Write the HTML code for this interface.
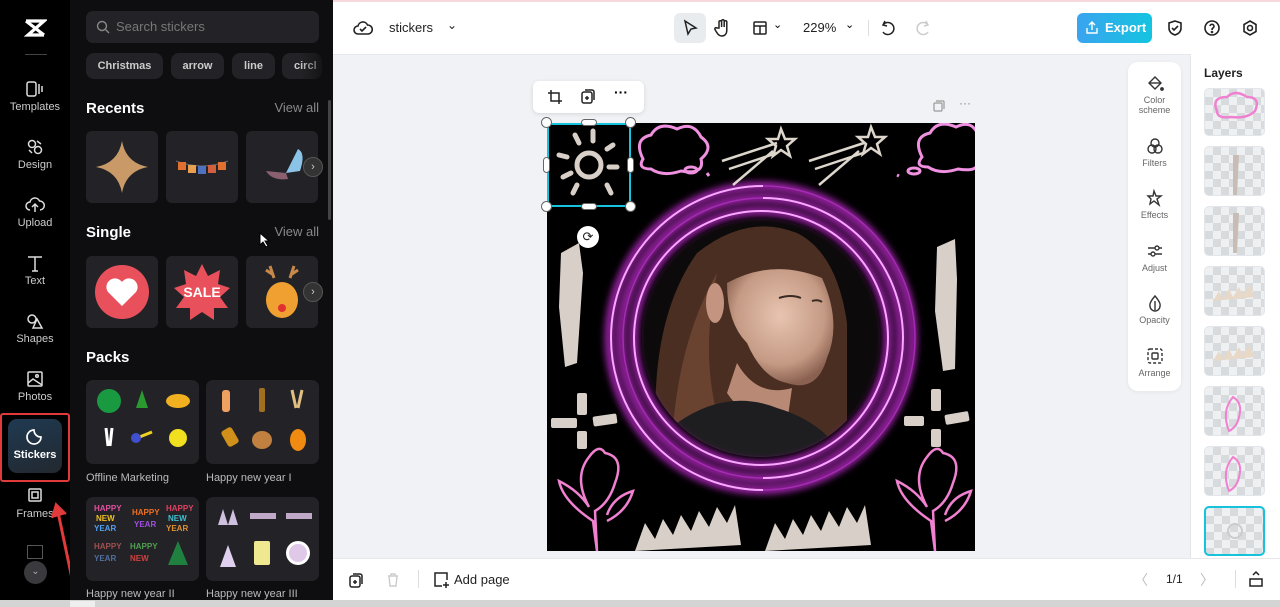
<!DOCTYPE html>
<html><head><meta charset="utf-8"><style>
*{box-sizing:border-box;margin:0;padding:0}
body{width:1280px;height:607px;overflow:hidden;font-family:"Liberation Sans",sans-serif;background:#fff;position:relative}
.abs{position:absolute}
.rail{left:0;top:0;width:70px;height:600px;background:#000;color:#ccc;font-size:11px}
.ri{position:absolute;left:0;width:70px;text-align:center}
.ri svg{display:block;margin:0 auto 3px}
.panel{left:70px;top:0;width:263px;height:600px;background:#0e0e10;color:#fff}
.tile{position:absolute;width:72px;height:72px;background:#232327;border-radius:6px}
.chip{position:absolute;top:53px;height:26px;background:#232327;border-radius:8px;color:#ccc;font-size:11px;font-weight:bold;line-height:26px;text-align:center}
.h{position:absolute;left:16px;font-size:15px;font-weight:bold}
.va{position:absolute;right:14px;font-size:13px;color:#888}
.pack{position:absolute;width:113px;height:84px;background:#232327;border-radius:7px}
.pl{position:absolute;font-size:11px;color:#bbb}
.arrowc{position:absolute;width:20px;height:20px;border-radius:50%;background:#333;border:1px solid #555;color:#ccc;font-size:11px;text-align:center;line-height:18px}
.tool{position:absolute;left:0;width:53px;text-align:center;font-size:9px;color:#666;line-height:10px}
.tool svg{display:block;margin:0 auto 3px}
.layer{position:absolute;left:1204px;width:61px;height:50px;border-radius:5px;background:
conic-gradient(#d8dbde 25%,#eef0f2 0 50%,#d8dbde 0 75%,#eef0f2 0) 0 0/16px 16px;border:1px solid #e2e6ea}
</style></head><body>
<div class="abs" style="left:0;top:0;width:1280px;height:2px;background:#f7d8dc"></div>

<div class="abs rail">
  <div class="ri" style="top:18px"><svg width="24" height="20" viewBox="0 0 24 20"><path d="M3 3h18L5 17h16" stroke="#fff" stroke-width="3.2" fill="none"/><path d="M3 3L21 17" stroke="#fff" stroke-width="3.2"/></svg></div>
  <div class="abs" style="left:25px;top:54px;width:22px;height:1px;background:#444"></div>
  <div class="ri" style="top:80px"><svg width="20" height="18" viewBox="0 0 20 18" fill="none" stroke="#ddd" stroke-width="1.5"><rect x="2" y="2" width="9" height="14" rx="2"/><path d="M14 4v10M17 6v6"/></svg>Templates</div>
  <div class="ri" style="top:138px"><svg width="20" height="18" viewBox="0 0 20 18" fill="none" stroke="#ddd" stroke-width="1.5"><circle cx="7" cy="6" r="3.5"/><circle cx="13" cy="12" r="3.5"/><path d="M12 3l4 3M4 12l3 3"/></svg>Design</div>
  <div class="ri" style="top:196px"><svg width="20" height="18" viewBox="0 0 20 18" fill="none" stroke="#ddd" stroke-width="1.5"><path d="M5 14a4 4 0 010-8 5 5 0 019.5-1A4 4 0 0115 14M10 16V8M7 11l3-3 3 3"/></svg>Upload</div>
  <div class="ri" style="top:254px"><svg width="20" height="18" viewBox="0 0 20 18" fill="none" stroke="#ddd" stroke-width="1.5"><path d="M3 3h14M10 3v14M7 17h6"/></svg>Text</div>
  <div class="ri" style="top:312px"><svg width="20" height="18" viewBox="0 0 20 18" fill="none" stroke="#ddd" stroke-width="1.5"><circle cx="7" cy="7" r="4"/><path d="M12 7l5 9H8z"/></svg>Shapes</div>
  <div class="ri" style="top:370px"><svg width="20" height="18" viewBox="0 0 20 18" fill="none" stroke="#ddd" stroke-width="1.5"><rect x="3" y="2" width="14" height="14" rx="1"/><path d="M3 13l5-4 9 6"/><circle cx="12" cy="6" r="1.3"/></svg>Photos</div>
  <div class="abs" style="left:0;top:413px;width:70px;height:69px;border:2px solid #e03a3a;border-radius:3px"></div>
  <div class="abs" style="left:8px;top:419px;width:54px;height:54px;border-radius:9px;background:linear-gradient(160deg,#1f3a52,#22282f)"></div>
  <div class="ri" style="top:428px;color:#fff;font-weight:bold"><svg width="20" height="18" viewBox="0 0 20 18" fill="none" stroke="#fff" stroke-width="1.7"><path d="M16 9a7 7 0 11-7-7c0 4 3 7 7 7z"/></svg>Stickers</div>
  <div class="ri" style="top:487px"><svg width="20" height="18" viewBox="0 0 20 18" fill="none" stroke="#ddd" stroke-width="1.5"><rect x="4" y="2" width="12" height="12" rx="1"/><rect x="7" y="5" width="6" height="6"/></svg>Frames</div>
  <svg class="abs" style="left:50px;top:500px" width="30" height="92" viewBox="0 0 30 92"><path d="M24 88L8 12" stroke="#e03a3a" stroke-width="3"/><path d="M2 18L6 4l10 10" fill="#e03a3a" stroke="#e03a3a" stroke-width="2"/></svg>
  <div class="abs" style="left:27px;top:545px;width:16px;height:14px;border:1.5px solid #555"></div>
  <div class="abs" style="left:24px;top:561px;width:23px;height:23px;border-radius:50%;background:#3a3a3e;color:#aaa;font-size:10px;text-align:center;line-height:22px">⌄</div>
</div>

<div class="abs panel">
  <div class="abs" style="left:16px;top:11px;width:233px;height:32px;background:#232327;border-radius:7px;color:#777;font-size:13px;line-height:32px;padding-left:30px">Search stickers
    <svg class="abs" style="left:10px;top:9px" width="14" height="14" viewBox="0 0 14 14" fill="none" stroke="#888" stroke-width="1.4"><circle cx="6" cy="6" r="4.5"/><path d="M9.5 9.5L13 13"/></svg></div>
  <div class="chip" style="left:16px;width:77px">Christmas</div>
  <div class="chip" style="left:101px;width:53px">arrow</div>
  <div class="chip" style="left:162px;width:43px">line</div>
  <div class="chip" style="left:212px;width:40px;text-align:left;padding-left:12px">circl</div>
  <div class="abs" style="left:230px;top:50px;width:33px;height:32px;background:linear-gradient(90deg,rgba(14,14,16,0),#0e0e10)"></div>
  <div class="h" style="top:100px">Recents</div><div class="va" style="top:100px">View all</div>
  <div class="tile" style="left:16px;top:131px"><svg width="72" height="72"><path d="M36 10Q40 32 62 36Q40 40 36 62Q32 40 10 36Q32 32 36 10z" fill="#c99a68"/></svg></div>
  <div class="tile" style="left:96px;top:131px"><svg width="72" height="72"><path d="M10 30Q36 40 62 30" stroke="#666" fill="none"/><rect x="12" y="31" width="8" height="8" fill="#e07030"/><rect x="22" y="34" width="8" height="8" fill="#e8a050"/><rect x="32" y="35" width="8" height="8" fill="#5070c0"/><rect x="42" y="34" width="8" height="8" fill="#d06040"/><rect x="52" y="31" width="8" height="8" fill="#e07030"/></svg></div>
  <div class="tile" style="left:176px;top:131px"><svg width="72" height="72"><path d="M40 42L52 18Q60 22 54 40z" fill="#8cc4e8"/><path d="M40 42L20 40Q26 50 42 48z" fill="#8a6070"/></svg></div>
  <div class="arrowc" style="left:233px;top:157px">›</div>
  <div class="h" style="top:224px">Single</div><div class="va" style="top:224px">View all</div>
  <svg class="abs" style="left:189px;top:232px" width="12" height="16"><path d="M1 1v12l3-3 3 5 2-1-3-5h4z" fill="#fff" stroke="#000"/></svg>
  <div class="tile" style="left:16px;top:256px"><svg width="72" height="72"><circle cx="36" cy="36" r="27" fill="#e8505b"/><path d="M36 50L22 36a8 8 0 0114-10 8 8 0 0114 10z" fill="#fff"/></svg></div>
  <div class="tile" style="left:96px;top:256px"><svg width="72" height="72"><path d="M36 8l6 12 12-6-2 14 12 4-10 9 8 11-14 0 0 12-12-8-12 8 0-12-14 0 8-11-10-9 12-4-2-14 12 6z" fill="#e8505b"/><text x="36" y="41" font-size="14" font-weight="bold" fill="#fff" text-anchor="middle" font-family="Liberation Sans">SALE</text></svg></div>
  <div class="tile" style="left:176px;top:256px"><svg width="72" height="72"><path d="M24 10l4 12M48 10l-4 12M20 14l6 4M52 14l-6 4" stroke="#c8884a" stroke-width="3"/><ellipse cx="36" cy="44" rx="16" ry="18" fill="#f0a030"/><circle cx="36" cy="52" r="4" fill="#e03030"/></svg></div>
  <div class="arrowc" style="left:233px;top:282px">›</div>
  <div class="h" style="top:349px">Packs</div>
  <div class="pack" style="left:16px;top:380px"><svg width="113" height="84"><circle cx="23" cy="21" r="12" fill="#1a9a40"/><path d="M56 10l-6 18h12z" fill="#2a9a30"/><ellipse cx="92" cy="21" rx="12" ry="7" fill="#f0b020"/><path d="M20 48l2 18M26 48l-2 18" stroke="#fff" stroke-width="3"/><path d="M46 60l20-8" stroke="#f0d020" stroke-width="3"/><circle cx="50" cy="58" r="5" fill="#4050d0"/><circle cx="92" cy="58" r="9" fill="#f0e020"/></svg></div>
  <div class="pack" style="left:136px;top:380px"><svg width="113" height="84"><rect x="16" y="10" width="8" height="22" rx="3" fill="#f0a060"/><rect x="53" y="8" width="6" height="24" rx="2" fill="#a07020"/><path d="M86 10l4 18M96 10l-4 18" stroke="#e0c080" stroke-width="3"/><rect x="18" y="48" width="12" height="18" rx="3" fill="#d0901a" transform="rotate(-30 24 57)"/><ellipse cx="56" cy="60" rx="10" ry="9" fill="#c08040"/><ellipse cx="92" cy="60" rx="8" ry="11" fill="#f08a10"/></svg></div>
  <div class="pl" style="left:16px;top:472px">Offline Marketing</div>
  <div class="pl" style="left:136px;top:472px">Happy new year I</div>
  <div class="pack" style="left:16px;top:497px"><svg width="113" height="84" font-family="Liberation Sans" font-size="8" font-weight="bold"><text x="8" y="14" fill="#e050a0">HAPPY</text><text x="10" y="24" fill="#f0c020">NEW</text><text x="8" y="34" fill="#50a0f0">YEAR</text><text x="46" y="18" fill="#f07020">HAPPY</text><text x="48" y="30" fill="#a050e0">YEAR</text><text x="80" y="14" fill="#e04060">HAPPY</text><text x="82" y="24" fill="#40c0d0">NEW</text><text x="80" y="34" fill="#e09030">YEAR</text><text x="8" y="52" fill="#a05050">HAPPY</text><text x="8" y="64" fill="#5070a0">YEAR</text><text x="44" y="52" fill="#50a050">HAPPY</text><text x="44" y="64" fill="#d04040">NEW</text><path d="M92 44l-10 24h20z" fill="#208040"/></svg></div>
  <div class="pack" style="left:136px;top:497px"><svg width="113" height="84"><path d="M12 28l5-16 5 16zM22 28l5-16 5 16z" fill="#d0c0e0"/><rect x="44" y="16" width="26" height="6" fill="#c0a8c8"/><rect x="80" y="16" width="26" height="6" fill="#c0a8c8"/><path d="M14 70l8-22 8 22z" fill="#e0d0f0"/><rect x="48" y="44" width="16" height="24" rx="2" fill="#f0e890"/><circle cx="92" cy="56" r="12" fill="#fff"/><circle cx="92" cy="56" r="9" fill="#e0c8e8"/></svg></div>
  <div class="pl" style="left:16px;top:588px">Happy new year II</div>
  <div class="pl" style="left:136px;top:588px">Happy new year III</div>
  <div class="abs" style="left:258px;top:100px;width:3px;height:120px;background:#444;border-radius:2px"></div>
</div>
<div class="abs" style="left:333px;top:280px;width:7px;height:46px;background:#2a2a2e;border-radius:0 5px 5px 0"></div>

<!-- top bar -->
<div class="abs" style="left:333px;top:2px;width:947px;height:52px;background:#fff"></div>
<svg class="abs" style="left:353px;top:19px" width="20" height="18" viewBox="0 0 20 18" fill="none" stroke="#222" stroke-width="1.6"><path d="M5 15a4 4 0 010-8 5 5 0 019.5-1A4 4 0 0115 15z"/><path d="M7 10l2 2 4-4"/></svg>
<div class="abs" style="left:389px;top:20px;font-size:13px;color:#222">stickers</div>
<div class="abs" style="left:447px;top:18px;font-size:12px;color:#222">⌄</div>
<div class="abs" style="left:674px;top:13px;width:32px;height:30px;border-radius:6px;background:#e9ecef"></div>
<svg class="abs" style="left:682px;top:19px" width="16" height="18" viewBox="0 0 16 18"><path d="M3 2l11 7-5 1-3 5z" fill="none" stroke="#222" stroke-width="1.5"/></svg>
<svg class="abs" style="left:714px;top:18px" width="18" height="20" viewBox="0 0 18 20" fill="none" stroke="#222" stroke-width="1.5"><path d="M5 10V4a1.3 1.3 0 012.6 0v5V3a1.3 1.3 0 012.6 0v6V4a1.3 1.3 0 012.6 0v8c0 4-2 6-5 6-3 0-4-2-6-5l-1-2a1.2 1.2 0 012-1z"/></svg>
<svg class="abs" style="left:752px;top:20px" width="16" height="16" viewBox="0 0 16 16" fill="none" stroke="#222" stroke-width="1.5"><rect x="2" y="2" width="12" height="12" rx="1"/><path d="M2 6h12M8 6v8"/></svg>
<div class="abs" style="left:773px;top:18px;font-size:11px">⌄</div>
<div class="abs" style="left:803px;top:20px;font-size:13px;color:#222">229%</div>
<div class="abs" style="left:845px;top:18px;font-size:11px">⌄</div>
<div class="abs" style="left:868px;top:20px;width:1px;height:16px;background:#ddd"></div>
<svg class="abs" style="left:881px;top:19px" width="16" height="18" viewBox="0 0 16 18" fill="none" stroke="#222" stroke-width="1.5"><path d="M4 2L2 6l4 1M2 6a6 6 0 110 7"/></svg>
<svg class="abs" style="left:914px;top:19px" width="16" height="18" viewBox="0 0 16 18" fill="none" stroke="#ccc" stroke-width="1.5"><path d="M12 2l2 4-4 1M14 6a6 6 0 100 7"/></svg>
<div class="abs" style="left:1077px;top:13px;width:75px;height:30px;border-radius:6px;background:linear-gradient(90deg,#3aa4ef,#14c4e0);color:#fff;font-weight:bold;font-size:13px;line-height:30px;padding-left:28px">Export</div>
<svg class="abs" style="left:1085px;top:20px" width="14" height="15" viewBox="0 0 14 15" fill="none" stroke="#fff" stroke-width="1.4"><path d="M7 10V2M4 5l3-3 3 3M2 8v5h10V8"/></svg>
<svg class="abs" style="left:1166px;top:19px" width="18" height="18" viewBox="0 0 18 18" fill="none" stroke="#222" stroke-width="1.6"><path d="M9 2l6 2v5c0 4-3 6-6 7-3-1-6-3-6-7V4z"/><path d="M6 9l2 2 4-4"/></svg>
<svg class="abs" style="left:1203px;top:19px" width="18" height="18" viewBox="0 0 18 18" fill="none" stroke="#222" stroke-width="1.6"><circle cx="9" cy="9" r="7"/><path d="M7 7a2 2 0 113 2c-1 .5-1 1-1 2"/><circle cx="9" cy="13" r=".5"/></svg>
<svg class="abs" style="left:1241px;top:19px" width="18" height="18" viewBox="0 0 18 18" fill="none" stroke="#222" stroke-width="1.6"><path d="M9 2l6 3.5v7L9 16l-6-3.5v-7z"/><circle cx="9" cy="9" r="2.5"/></svg>

<!-- canvas area -->
<div class="abs" style="left:333px;top:54px;width:857px;height:504px;background:#f0f2f5;border-top:1px solid #e6e8eb"></div>
<div class="abs" style="left:533px;top:81px;width:111px;height:32px;background:#fff;border-radius:6px;box-shadow:0 1px 4px rgba(0,0,0,.12)"></div>
<svg class="abs" style="left:547px;top:89px" width="16" height="16" viewBox="0 0 16 16" fill="none" stroke="#222" stroke-width="1.5"><path d="M4 1v11h11M1 4h11v11"/></svg>
<svg class="abs" style="left:580px;top:88px" width="16" height="17" viewBox="0 0 16 17" fill="none" stroke="#222" stroke-width="1.5"><rect x="2" y="4" width="10" height="11" rx="2"/><path d="M5 2h7a2 2 0 012 2v8"/><path d="M7 8v4M5 10h4"/></svg>
<div class="abs" style="left:614px;top:84px;font-size:14px;font-weight:bold">···</div>
<svg class="abs" style="left:932px;top:99px" width="14" height="14" viewBox="0 0 14 14" fill="none" stroke="#999" stroke-width="1.2"><rect x="2" y="4" width="8" height="8" rx="1"/><path d="M4 2h7a1 1 0 011 1v7"/></svg>
<div class="abs" style="left:959px;top:96px;font-size:12px;color:#888">···</div>

<!-- canvas -->
<svg class="abs" style="left:547px;top:123px" width="428" height="428" viewBox="0 0 428 428">
<defs><clipPath id="cp"><circle cx="214" cy="215" r="119"/></clipPath>
<radialGradient id="sk" cx="50%" cy="40%" r="60%"><stop offset="0" stop-color="#e8c4b0"/><stop offset=".7" stop-color="#c49a84"/><stop offset="1" stop-color="#8a6050"/></radialGradient>
<filter id="gl"><feGaussianBlur stdDeviation="4"/></filter></defs>
<rect width="428" height="428" fill="#000"/>
<g clip-path="url(#cp)">
<rect x="90" y="90" width="250" height="250" fill="#0c0a0a"/>
<path d="M110 330Q100 200 150 130Q200 90 250 110Q290 130 300 200L300 330z" fill="#4a2e22"/>
<path d="M125 320Q130 220 170 150Q150 250 180 320z" fill="#6a4230"/>
<path d="M180 160Q225 135 275 155Q295 200 280 235Q270 270 240 260Q215 255 200 220Q180 200 180 160z" fill="url(#sk)"/>
<ellipse cx="168" cy="180" rx="9" ry="20" fill="#c49480"/>
<path d="M190 240Q210 275 245 265L240 300Q200 300 180 270z" fill="#b88a76"/>
<path d="M130 300Q180 265 230 285Q280 300 300 340H120z" fill="#1e1e20"/>
<path d="M232 175q12-4 22 0M265 178q6-2 10 1" stroke="#3a2a24" stroke-width="2" fill="none"/>
</g>
<g fill="none" stroke="#e030f0" stroke-width="6" filter="url(#gl)"><circle cx="214" cy="215" r="127"/><circle cx="214" cy="215" r="140"/><circle cx="214" cy="215" r="152"/></g>
<g fill="none" stroke="#f8a8ff" stroke-width="2"><circle cx="214" cy="215" r="127"/><path d="M216 63a152 152 0 000 304" /><path d="M216 75a140 140 0 010 280"/></g>
<g fill="none" stroke="#b030c0" stroke-width="1.5" opacity=".8"><path d="M216 63a152 152 0 010 304"/><path d="M216 75a140 140 0 000 280"/></g>
<g fill="none" stroke="#f090e0" stroke-width="3"><path d="M96 36q-10-20 8-24q8-14 26-6q16-8 24 8q14 10 0 22q4 16-20 12q-18 6-30-2q-14 0-8-10z"/><ellipse cx="144" cy="47" rx="6" ry="3"/><path d="M160 50l2 3"/><path d="M375 34q-10-20 8-24q8-14 26-6q16-8 22 8q14 10 0 22q4 16-20 12q-18 6-30-2q-14 0-6-10z"/><ellipse cx="367" cy="48" rx="6" ry="3"/><path d="M350 52l2 1"/></g>
<g stroke="#ddd6cc" stroke-width="2.5" fill="none"><path d="M175 38l55-18M182 46l48-16M186 62l40-34"/><path d="M262 38l55-18M268 46l48-16M272 62l40-34"/><path d="M234 6l4 10 10 0-8 7 3 10-9-6-8 6 3-10-8-7 10 0z"/><path d="M324 4l4 10 10 0-8 7 3 10-9-6-8 6 3-10-8-7 10 0z"/></g>
<g stroke="#d8d0c8" stroke-width="5" fill="none" stroke-linecap="round"><circle cx="42" cy="42" r="12"/><path d="M28 12l4 8M46 8v10M66 22l-6 4M70 44h-8M60 62l4 8M30 62l-4 8M16 54l8-4M12 32l8 2"/></g>
<g fill="#d8d0c8"><path d="M14 130l18-10 4 30-6 90-12 4-6-60z"/><path d="M390 124l18-8 2 40-2 90-12 2-8-60z"/>
<rect x="30" y="270" width="10" height="22" rx="2"/><rect x="4" y="295" width="26" height="10" rx="2"/><rect x="46" y="292" width="24" height="10" rx="2" transform="rotate(-8 58 297)"/><rect x="30" y="308" width="10" height="18" rx="2"/>
<rect x="384" y="266" width="10" height="22" rx="2"/><rect x="357" y="293" width="20" height="10" rx="2"/><rect x="398" y="290" width="24" height="10" rx="2" transform="rotate(-10 410 295)"/><rect x="384" y="306" width="10" height="18" rx="2"/>
<path d="M88 428l10-28 10 16 8-20 10 16 8-20 10 16 8-20 10 16 8-20 10 16 8-18 6 40z"/><path d="M218 428l10-28 10 16 8-20 10 16 8-20 10 16 8-20 10 16 8-20 10 16 8-18 6 40z"/></g>
<g fill="none" stroke="#f080d0" stroke-width="2.5"><path d="M50 428l-4-30q-30-20-34-40q20 10 30 26q-16-30 0-50q10-14 16-4q20 4 10 30q-6 20-20 28zM60 398q20-10 26-30q-20 6-26 24"/><path d="M388 428l-4-30q-30-20-34-40q20 10 30 26q-16-30 0-50q10-14 16-4q20 4 10 30q-6 20-20 28zM398 398q20-10 26-30q-20 6-26 24"/></g>
</svg>
<!-- selection -->
<div class="abs" style="left:547px;top:123px;width:84px;height:84px;border:2px solid #16c2dc"></div>
<div class="abs" style="left:541px;top:117px;width:11px;height:11px;border-radius:50%;background:#fff;border:1px solid #666"></div>
<div class="abs" style="left:625px;top:117px;width:11px;height:11px;border-radius:50%;background:#fff;border:1px solid #666"></div>
<div class="abs" style="left:541px;top:201px;width:11px;height:11px;border-radius:50%;background:#fff;border:1px solid #666"></div>
<div class="abs" style="left:625px;top:201px;width:11px;height:11px;border-radius:50%;background:#fff;border:1px solid #666"></div>
<div class="abs" style="left:581px;top:119px;width:16px;height:7px;border-radius:4px;background:#fff;border:1px solid #666"></div>
<div class="abs" style="left:581px;top:203px;width:16px;height:7px;border-radius:4px;background:#fff;border:1px solid #666"></div>
<div class="abs" style="left:543px;top:157px;width:7px;height:16px;border-radius:4px;background:#fff;border:1px solid #666"></div>
<div class="abs" style="left:627px;top:157px;width:7px;height:16px;border-radius:4px;background:#fff;border:1px solid #666"></div>
<div class="abs" style="left:577px;top:226px;width:22px;height:22px;border-radius:50%;background:#fff;text-align:center;line-height:22px;font-size:13px;color:#222">⟳</div>

<!-- tools -->
<div class="abs" style="left:1128px;top:62px;width:53px;height:329px;background:#fff;border-radius:10px;box-shadow:0 1px 4px rgba(0,0,0,.06)">
  <div class="tool" style="top:12px"><svg width="18" height="18" viewBox="0 0 18 18" fill="none" stroke="#333" stroke-width="1.4"><path d="M3 9l6-6 6 6-6 6z"/><path d="M3 9h12" /><circle cx="16" cy="15" r="1.2" fill="#333"/></svg>Color<br>scheme</div>
  <div class="tool" style="top:75px"><svg width="18" height="18" viewBox="0 0 18 18" fill="none" stroke="#333" stroke-width="1.4"><circle cx="9" cy="6" r="4"/><circle cx="6" cy="12" r="4"/><circle cx="12" cy="12" r="4"/></svg>Filters</div>
  <div class="tool" style="top:127px"><svg width="18" height="18" viewBox="0 0 18 18" fill="none" stroke="#333" stroke-width="1.4"><path d="M8 2l2 5 5 0-4 3 2 6-5-4-4 3 1-5-3-3h5z"/></svg>Effects</div>
  <div class="tool" style="top:180px"><svg width="18" height="18" viewBox="0 0 18 18" fill="none" stroke="#333" stroke-width="1.4"><path d="M2 6h14M2 12h14"/><circle cx="11" cy="6" r="2" fill="#fff"/><circle cx="7" cy="12" r="2" fill="#fff"/></svg>Adjust</div>
  <div class="tool" style="top:232px"><svg width="18" height="18" viewBox="0 0 18 18" fill="none" stroke="#333" stroke-width="1.4"><path d="M9 2q6 7 5 10a5 5 0 01-10 0q-1-3 5-10z"/><path d="M9 7v9" /></svg>Opacity</div>
  <div class="tool" style="top:285px"><svg width="18" height="18" viewBox="0 0 18 18" fill="none" stroke="#333" stroke-width="1.4"><rect x="2" y="2" width="14" height="14" rx="2" stroke-dasharray="3 2"/><rect x="6" y="6" width="6" height="6" rx="1"/></svg>Arrange</div>
</div>

<!-- layers -->
<div class="abs" style="left:1190px;top:54px;width:90px;height:504px;background:#fff;border-left:1px solid #e4e6ea"></div>
<div class="abs" style="left:1204px;top:66px;font-size:12px;font-weight:bold;color:#222">Layers</div>
<div class="layer" style="top:88px;height:48px"><svg width="61" height="48"><path d="M12 22q-6-14 10-14q8-8 20 0q14 0 8 14q-8 8-24 6q-14 2-14-6z" fill="none" stroke="#f080d0" stroke-width="2.5"/></svg></div>
<div class="layer" style="top:146px"><svg width="61" height="50"><path d="M28 8l6 0-2 40h-4z" fill="#c8bcb4"/></svg></div>
<div class="layer" style="top:206px"><svg width="61" height="50"><path d="M28 6l6 0-2 40h-4z" fill="#c8bcb4"/></svg></div>
<div class="layer" style="top:266px"><svg width="61" height="50"><path d="M8 34l6-10 4 8 6-10 4 8 6-10 4 8 6-10 6 12z" fill="#e8d8c8"/></svg></div>
<div class="layer" style="top:326px"><svg width="61" height="50"><path d="M8 34l6-10 4 8 6-10 4 8 6-10 4 8 6-10 6 12z" fill="#e8d8c8"/></svg></div>
<div class="layer" style="top:386px"><svg width="61" height="50"><path d="M24 44q-8-20 4-34q10 6 6 20q-2 10-10 14z" fill="none" stroke="#f080d0" stroke-width="2"/></svg></div>
<div class="layer" style="top:446px"><svg width="61" height="50"><path d="M24 44q-8-20 4-34q10 6 6 20q-2 10-10 14z" fill="none" stroke="#f080d0" stroke-width="2"/></svg></div>
<div class="layer" style="top:506px;border:2px solid #16c2dc"><svg width="58" height="46"><circle cx="29" cy="23" r="7" fill="none" stroke="#ccc" stroke-width="2"/></svg></div>

<!-- bottom bar -->
<div class="abs" style="left:333px;top:558px;width:947px;height:43px;background:#fff;border-top:1px solid #e6e8eb"></div>
<svg class="abs" style="left:348px;top:572px" width="16" height="17" viewBox="0 0 16 17" fill="none" stroke="#222" stroke-width="1.5"><rect x="2" y="4" width="10" height="11" rx="2"/><path d="M5 2h7a2 2 0 012 2v8M7 8v4M5 10h4"/></svg>
<svg class="abs" style="left:386px;top:572px" width="14" height="16" viewBox="0 0 14 16" fill="none" stroke="#ccc" stroke-width="1.4"><path d="M2 4h10M5 4V2h4v2M3 4l1 10h6l1-10"/></svg>
<div class="abs" style="left:418px;top:570px;width:1px;height:18px;background:#ddd"></div>
<svg class="abs" style="left:432px;top:571px" width="18" height="18" viewBox="0 0 18 18" fill="none" stroke="#222" stroke-width="1.5"><path d="M10 15H3V2h12v7"/><path d="M14 11v6M11 14h6"/></svg>
<div class="abs" style="left:454px;top:572px;font-size:13px;color:#222">Add page</div>
<div class="abs" style="left:1134px;top:570px;font-size:14px;color:#bbb">〈</div>
<div class="abs" style="left:1166px;top:572px;font-size:12px;color:#222">1/1</div>
<div class="abs" style="left:1200px;top:570px;font-size:14px;color:#bbb">〉</div>
<div class="abs" style="left:1235px;top:570px;width:1px;height:18px;background:#ddd"></div>
<svg class="abs" style="left:1248px;top:570px" width="16" height="18" viewBox="0 0 16 18" fill="none" stroke="#222" stroke-width="1.5"><rect x="2" y="9" width="12" height="7"/><path d="M5 5l3-3 3 3"/></svg>
<div class="abs" style="left:0;top:600px;width:1280px;height:7px;background:#d4d4d4"></div>
<div class="abs" style="left:70px;top:601px;width:25px;height:6px;background:#eee"></div>
</body></html>
